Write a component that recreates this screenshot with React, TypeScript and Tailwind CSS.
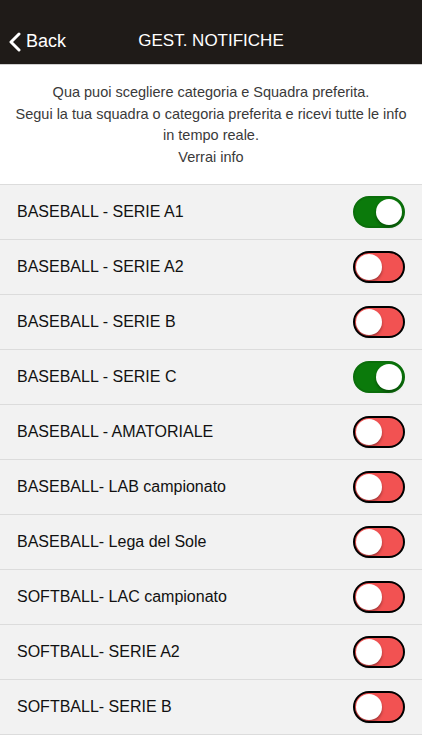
import { useState } from "react";

const items: { label: string; on: boolean }[] = [
  { label: "BASEBALL - SERIE A1", on: true },
  { label: "BASEBALL - SERIE A2", on: false },
  { label: "BASEBALL - SERIE B", on: false },
  { label: "BASEBALL - SERIE C", on: true },
  { label: "BASEBALL - AMATORIALE", on: false },
  { label: "BASEBALL- LAB campionato", on: false },
  { label: "BASEBALL- Lega del Sole", on: false },
  { label: "SOFTBALL- LAC campionato", on: false },
  { label: "SOFTBALL- SERIE A2", on: false },
  { label: "SOFTBALL- SERIE B", on: false },
];

function Toggle({ on, onClick }: { on: boolean; onClick: () => void }) {
  return (
    <button
      type="button"
      onClick={onClick}
      className={`relative w-[52px] h-[32px] rounded-full border-2 ${
        on ? "bg-[#0b7a0b] border-[#0b6e0b]" : "bg-[#f25252] border-black"
      }`}
    >
      <span
        className={`absolute top-[1px] w-[26px] h-[26px] rounded-full bg-white shadow-[0_2px_3px_rgba(0,0,0,0.35)] ${
          on ? "right-[1px]" : "left-[1px]"
        }`}
      />
    </button>
  );
}

export default function App() {
  const [state, setState] = useState(items.map((i) => i.on));

  return (
    <div className="w-[422px] h-[750px] bg-white overflow-hidden font-['Liberation_Sans',Arial,sans-serif]">
      {/* Header */}
      <div className="h-[65px] bg-[#1f1b18] border-b border-[#cfcfcf] flex items-end pb-[9px] relative">
        <div className="flex items-center pl-[8px] text-white text-[18px]">
          <svg width="14" height="20" viewBox="0 0 14 20" className="mr-[4px]">
            <path d="M11 2 L3 10 L11 18" fill="none" stroke="white" strokeWidth="3" strokeLinecap="round" strokeLinejoin="round" />
          </svg>
          Back
        </div>
        <div className="absolute left-0 right-0 bottom-[11px] text-center text-white text-[17px] pointer-events-none">
          GEST. NOTIFICHE
        </div>
      </div>

      {/* Intro */}
      <div className="h-[119px] flex flex-col items-center justify-center text-center text-[14.5px] leading-[21.5px] text-[#3a3a3a] px-1 pt-[1px]">
        <p>Qua puoi scegliere categoria e Squadra preferita.</p>
        <p>Segui la tua squadra o categoria preferita e ricevi tutte le info</p>
        <p>in tempo reale.</p>
        <p>Verrai info</p>
      </div>

      {/* List */}
      <div className="border-t border-[#dcdcdc]">
        {items.map((item, i) => (
          <div
            key={item.label}
            className="h-[55px] bg-[#f2f2f2] border-b border-[#dcdcdc] flex items-center justify-between pl-[17px] pr-[17px]"
          >
            <span className="text-[16px] text-[#111] -mt-[1px]">{item.label}</span>
            <Toggle
              on={state[i]}
              onClick={() => setState((s) => s.map((v, j) => (j === i ? !v : v)))}
            />
          </div>
        ))}
      </div>
    </div>
  );
}
